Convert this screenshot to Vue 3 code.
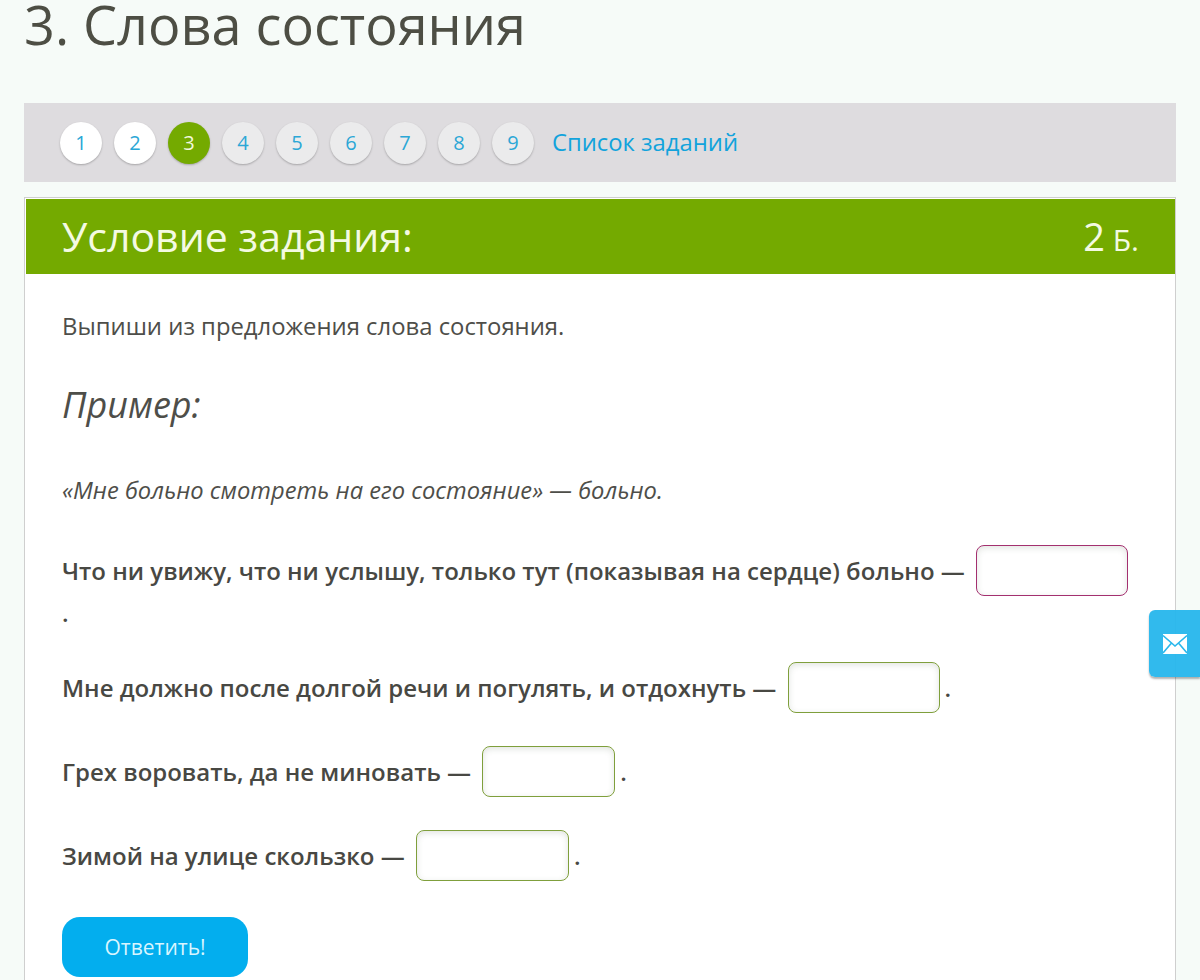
<script setup>
const steps = [1, 2, 3, 4, 5, 6, 7, 8, 9]
const stepClass = (n) => (n === 3 ? 'current' : n < 3 ? 'done' : '')
</script>

<template>
  <div class="page">
    <h1 class="title">3. Слова состояния</h1>
    <nav class="steps">
      <a v-for="n in steps" :key="n" class="step" :class="stepClass(n)">{{ n }}</a>
      <a class="list-link">Список заданий</a>
    </nav>
    <section class="card">
      <header class="card-head">
        <span class="head-title">Условие задания:</span>
        <span class="points"><span class="points-num">2</span> Б.</span>
      </header>
      <div class="card-body">
        <p class="lead">Выпиши из предложения слова состояния.</p>
        <h2 class="example-title">Пример:</h2>
        <p class="example">«Мне больно смотреть на его состояние» — больно.</p>
        <p class="task first">Что ни увижу, что ни услышу, только тут (показывая на сердце) больно — <input class="field wrong w152" type="text" />.</p>
        <p class="task">Мне должно после долгой речи и погулять, и отдохнуть — <input class="field w152" type="text" />.</p>
        <p class="task">Грех воровать, да не миновать — <input class="field w133" type="text" />.</p>
        <p class="task">Зимой на улице скользко — <input class="field w153" type="text" />.</p>
        <button class="submit" type="button">Ответить!</button>
      </div>
    </section>
    <div class="mail-tab">
      <svg width="24" height="20" viewBox="0 0 24 20" aria-hidden="true">
        <rect width="24" height="20" fill="#fff" />
        <path fill="none" stroke="#29b7ec" stroke-width="1.600" d="M0 1.500 12 12 24 1.500M0 19l8.500-10M24 19l-8.500-10" />
      </svg>
    </div>
  </div>
</template>

<style>
html, body {
  background: #f6fbf8;
}
body {
  overflow: hidden;
}
</style>

<style scoped>
.page {
  height: 980px;
  overflow: hidden;
  padding: 0 24px;
  box-sizing: border-box;
  font-family: "Open Sans", sans-serif;
  color: #4e4e49;
  background: #f6fbf8;
}
.title {
  margin: 0 0 55px;
  font-size: 54px;
  line-height: 48px;
  font-weight: 400;
  color: #4d4e44;
}
.steps {
  display: flex;
  align-items: center;
  gap: 12px;
  height: 79px;
  padding-left: 36px;
  background: #dedcdf;
}
.step {
  width: 42px;
  height: 42px;
  border-radius: 50%;
  display: flex;
  align-items: center;
  justify-content: center;
  font-size: 20px;
  color: #2ba7d6;
  background: #ebebec;
  box-shadow: 0 1px 2px rgba(0, 0, 0, 0.25);
}
.step.done {
  background: #fff;
}
.step.current {
  background: #74aa00;
  color: #f2f8dc;
}
.list-link {
  margin: -2px 0 0 6px;
  font-size: 23.8px;
  color: #12a3dc;
}
.card {
  margin-top: 15px;
  border: 1px solid #cfcfcf;
  background: #fff;
  padding: 1px 0 0 1px;
  height: 900px;
  box-sizing: border-box;
}
.card-head {
  height: 75px;
  background: #74aa00;
  color: #f4fae2;
  display: flex;
  align-items: center;
  justify-content: space-between;
  padding: 0 36px;
}
.head-title {
  font-size: 41px;
  line-height: 74px;
  margin-top: -2px;
}
.points {
  font-size: 30px;
  margin-top: -2px;
}
.points-num {
  font-size: 38px;
}
.card-body {
  padding: 0 36px;
}
.lead {
  margin: 36px 0 0;
  font-size: 23.85px;
  line-height: 32px;
}
.example-title {
  margin: 39px 0 0;
  font-size: 36px;
  line-height: 48px;
  font-weight: 400;
  font-style: italic;
}
.example {
  margin: 45px 0 0;
  font-size: 23.7px;
  line-height: 32px;
  font-style: italic;
}
.task {
  margin: 0;
  font-size: 24px;
  line-height: 42px;
  font-weight: 600;
  color: #484843;
}
.task.first {
  margin: 39px 0 -9px;
}
.task + .task {
  margin-top: 37px;
}
.field {
  display: inline-block;
  vertical-align: text-bottom;
  width: 152px;
  height: 51px;
  box-sizing: border-box;
  margin: 0 5px -9px;
  padding: 0;
  border: 1px solid #7f9f3c;
  border-radius: 8px;
  background: #fff;
  box-shadow: inset 0 2px 6px rgba(70, 90, 60, 0.16);
}
.field.wrong {
  border-color: #a3306f;
}
.w152 { width: 152px; }
.w133 { width: 133px; }
.w153 { width: 153px; }
.submit {
  display: block;
  margin-top: 40px;
  width: 186px;
  height: 60px;
  border: none;
  border-radius: 18px;
  background: #03aeee;
  color: #d8f5ff;
  font-family: inherit;
  font-size: 21px;
}
.mail-tab {
  position: fixed;
  right: 0;
  top: 610px;
  width: 51px;
  height: 67px;
  border-radius: 6px 0 0 6px;
  background: rgba(41, 183, 236, 0.96);
  box-shadow: 0 2px 2px rgba(0, 0, 0, 0.3);
  display: flex;
  align-items: center;
  justify-content: center;
}
</style>
